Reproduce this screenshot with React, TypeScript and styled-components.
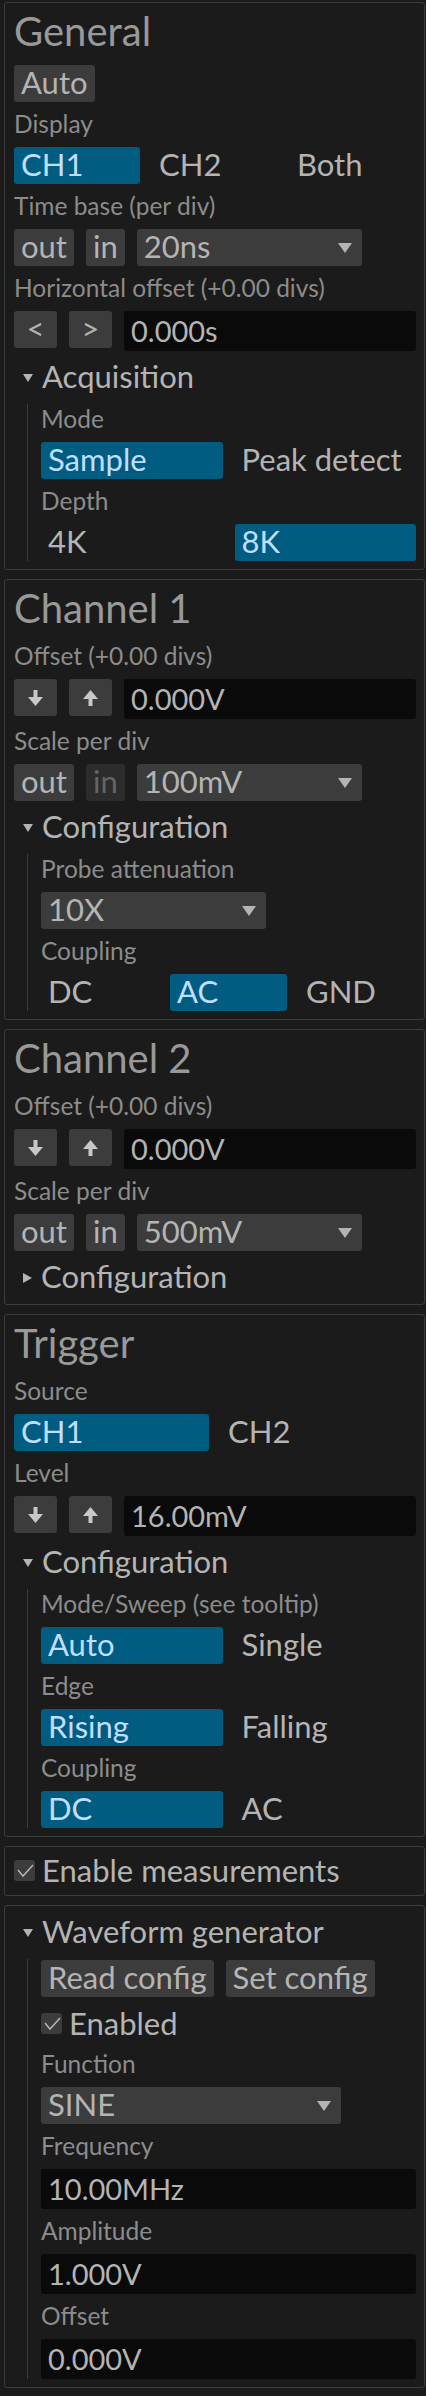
import * as React from 'react';
import styled, { createGlobalStyle } from 'styled-components';

const GlobalStyle = createGlobalStyle`
  html, body {
    margin: 0;
    padding: 0;
    background: #1b1b1b;
  }
  body {
    font-family: Lato, 'Noto Sans', sans-serif;
    color: #8c8c8c;
  }
  * {
    box-sizing: border-box;
  }
`;

// ICONS
const ArrowIcon: React.FC<{ up?: boolean }> = ({ up }) => (
  <svg width="15" height="16" viewBox="0 0 15 16" style={up ? { transform: 'rotate(180deg)' } : undefined}>
    <rect x="5.5" y="0" width="4" height="8" fill="#c8c8c8" />
    <polygon points="0,7 15,7 7.5,16" fill="#c8c8c8" />
  </svg>
);

const ComboArrow = () => (
  <svg width="14" height="10" viewBox="0 0 14 10">
    <polygon points="0,0 14,0 7,10" fill="#b4b4b4" />
  </svg>
);

const Caret: React.FC<{ open?: boolean }> = ({ open }) =>
  open ? (
    <svg width="10" height="8" viewBox="0 0 10 8">
      <polygon points="0,0 10,0 5,8" fill="#b4b4b4" />
    </svg>
  ) : (
    <svg width="9" height="10" viewBox="0 0 9 10">
      <polygon points="0,0 9,5 0,10" fill="#b4b4b4" />
    </svg>
  );

const Check = () => (
  <svg width="21" height="21" viewBox="0 0 21 21">
    <polyline points="4,10 9,16 19,5" fill="none" stroke="#b4b4b4" strokeWidth="1.5" />
  </svg>
);

// COMPONENTS
const OptionGroup: React.FC<{ items: string[]; selected: number }> = ({ items, selected }) => (
  <Options $cols={items.length}>
    {items.map((item, i) => (
      <Option key={item} $selected={i === selected}>
        {item}
      </Option>
    ))}
  </Options>
);

const StepRow: React.FC<{ value: string; arrows?: boolean }> = ({ value, arrows }) => (
  <Row>
    <IconButton>{arrows ? <ArrowIcon /> : '<'}</IconButton>
    <IconButton>{arrows ? <ArrowIcon up /> : '>'}</IconButton>
    <Field>{value}</Field>
  </Row>
);

const ZoomRow: React.FC<{ value: string; inDisabled?: boolean }> = ({ value, inDisabled }) => (
  <Row>
    <Button>out</Button>
    <Button $disabled={inDisabled}>in</Button>
    <Combo $w={225}>
      <ComboText>{value}</ComboText>
      <ComboArrow />
    </Combo>
  </Row>
);

const Collapsing: React.FC<{ title: string; open?: boolean; children?: React.ReactNode }> = ({
  title,
  open,
  children,
}) => (
  <>
    <Header>
      <Caret open={open} />
      <HeaderText>{title}</HeaderText>
    </Header>
    {open && <Indent>{children}</Indent>}
  </>
);

const App: React.FC = () => {
  return (
    <Page>
      <GlobalStyle />

      <Panel>
        <Heading>General</Heading>
        <Row>
          <Button>Auto</Button>
        </Row>
        <Label>Display</Label>
        <OptionGroup items={['CH1', 'CH2', 'Both']} selected={0} />
        <Label>Time base (per div)</Label>
        <ZoomRow value="20ns" />
        <Label>Horizontal offset (+0.00 divs)</Label>
        <StepRow value="0.000s" />
        <Collapsing title="Acquisition" open>
          <Label>Mode</Label>
          <OptionGroup items={['Sample', 'Peak detect']} selected={0} />
          <Label>Depth</Label>
          <OptionGroup items={['4K', '8K']} selected={1} />
        </Collapsing>
      </Panel>

      <Panel>
        <Heading>Channel 1</Heading>
        <Label>Offset (+0.00 divs)</Label>
        <StepRow value="0.000V" arrows />
        <Label>Scale per div</Label>
        <ZoomRow value="100mV" inDisabled />
        <Collapsing title="Configuration" open>
          <Label>Probe attenuation</Label>
          <Combo $w={225}>
            <ComboText>10X</ComboText>
            <ComboArrow />
          </Combo>
          <Label>Coupling</Label>
          <OptionGroup items={['DC', 'AC', 'GND']} selected={1} />
        </Collapsing>
      </Panel>

      <Panel>
        <Heading>Channel 2</Heading>
        <Label>Offset (+0.00 divs)</Label>
        <StepRow value="0.000V" arrows />
        <Label>Scale per div</Label>
        <ZoomRow value="500mV" />
        <Collapsing title="Configuration" />
      </Panel>

      <Panel>
        <Heading>Trigger</Heading>
        <Label>Source</Label>
        <OptionGroup items={['CH1', 'CH2']} selected={0} />
        <Label>Level</Label>
        <StepRow value="16.00mV" arrows />
        <Collapsing title="Configuration" open>
          <Label>Mode/Sweep (see tooltip)</Label>
          <OptionGroup items={['Auto', 'Single']} selected={0} />
          <Label>Edge</Label>
          <OptionGroup items={['Rising', 'Falling']} selected={0} />
          <Label>Coupling</Label>
          <OptionGroup items={['DC', 'AC']} selected={0} />
        </Collapsing>
      </Panel>

      <Panel $tight>
        <CheckRow>
          <CheckBox>
            <Check />
          </CheckBox>
          Enable measurements
        </CheckRow>
      </Panel>

      <Panel>
        <Collapsing title="Waveform generator" open>
          <Row>
            <Button>Read config</Button>
            <Button>Set config</Button>
          </Row>
          <CheckRow>
            <CheckBox>
              <Check />
            </CheckBox>
            Enabled
          </CheckRow>
          <Label>Function</Label>
          <Combo $w={300}>
            <ComboText>SINE</ComboText>
            <ComboArrow />
          </Combo>
          <Label>Frequency</Label>
          <Field>10.00MHz</Field>
          <Label>Amplitude</Label>
          <Field>1.000V</Field>
          <Label>Offset</Label>
          <Field>0.000V</Field>
        </Collapsing>
      </Panel>
    </Page>
  );
};

export default App;

const Page = styled.div`
  width: 426px;
  padding: 2px 1px 12px 4px;
  display: flex;
  flex-direction: column;
  gap: 9px;
`;

const Panel = styled.section<{ $tight?: boolean }>`
  display: flex;
  flex-direction: column;
  gap: 8px;
  padding: ${p => (p.$tight ? '5px 8px 6px 9px' : '8px 8px 8px 9px')};
  border: 1px solid #3c3c3c;
  border-radius: 3px;
`;

const Heading = styled.h2`
  margin: 0;
  height: 46px;
  font-size: 40px;
  font-weight: 400;
  line-height: 40px;
  color: #999999;
  white-space: nowrap;
`;

const Label = styled.div`
  height: 29px;
  font-size: 24.5px;
  line-height: 28px;
  color: #8c8c8c;
  white-space: nowrap;
`;

const Row = styled.div`
  display: flex;
  align-items: flex-start;
  gap: 12px;
`;

const Button = styled.div<{ $disabled?: boolean }>`
  height: 37px;
  padding: 0 7px;
  display: flex;
  justify-content: center;
  border-radius: 3px;
  background: ${p => (p.$disabled ? '#2c2c2c' : '#3c3c3c')};
  color: ${p => (p.$disabled ? '#646464' : '#b4b4b4')};
  font-size: 31px;
  line-height: 35px;
  white-space: nowrap;
`;

const IconButton = styled(Button)`
  width: 43px;
  padding: 0;
  align-items: flex-start;

  svg {
    align-self: center;
  }
`;

const Combo = styled.div<{ $w: number }>`
  width: ${p => p.$w}px;
  height: 37px;
  padding: 0 10px 0 7px;
  display: flex;
  align-items: center;
  justify-content: space-between;
  border-radius: 3px;
  background: #3c3c3c;
  color: #b4b4b4;
  font-size: 31px;
`;

const ComboText = styled.span`
  align-self: flex-start;
  line-height: 35px;
  white-space: nowrap;
`;

const Field = styled.div`
  flex: 1 1 auto;
  height: 40px;
  padding: 0 7px;
  border-radius: 3px;
  background: #0a0a0a;
  color: #b4b4b4;
  font-size: 29px;
  line-height: 40px;
  white-space: nowrap;
`;

const Options = styled.div<{ $cols: number }>`
  display: grid;
  grid-template-columns: repeat(${p => p.$cols}, 1fr);
  column-gap: 12px;
`;

const Option = styled.div<{ $selected?: boolean }>`
  height: 37px;
  padding: 0 7px;
  border-radius: 3px;
  background: ${p => (p.$selected ? '#005c80' : 'transparent')};
  color: ${p => (p.$selected ? '#c0deff' : '#b4b4b4')};
  font-size: 31px;
  line-height: 35px;
  white-space: nowrap;
`;

const Header = styled.div`
  height: 37px;
  padding-left: 9px;
  display: flex;
  align-items: center;
  color: #b4b4b4;
  font-size: 31px;
`;

const HeaderText = styled.span`
  align-self: flex-start;
  margin-left: 9px;
  line-height: 35px;
  white-space: nowrap;
`;

const Indent = styled.div`
  display: flex;
  flex-direction: column;
  gap: 8px;
  margin-left: 13px;
  padding: 1px 0 0 13px;
  border-left: 1px solid #3c3c3c;
`;

const CheckRow = styled.div`
  height: 37px;
  display: flex;
  align-items: center;
  gap: 7px;
  color: #b4b4b4;
  font-size: 31px;
  line-height: 35px;
  white-space: nowrap;
`;

const CheckBox = styled.span`
  width: 21px;
  height: 21px;
  display: flex;
  border-radius: 3px;
  background: #3c3c3c;
`;
